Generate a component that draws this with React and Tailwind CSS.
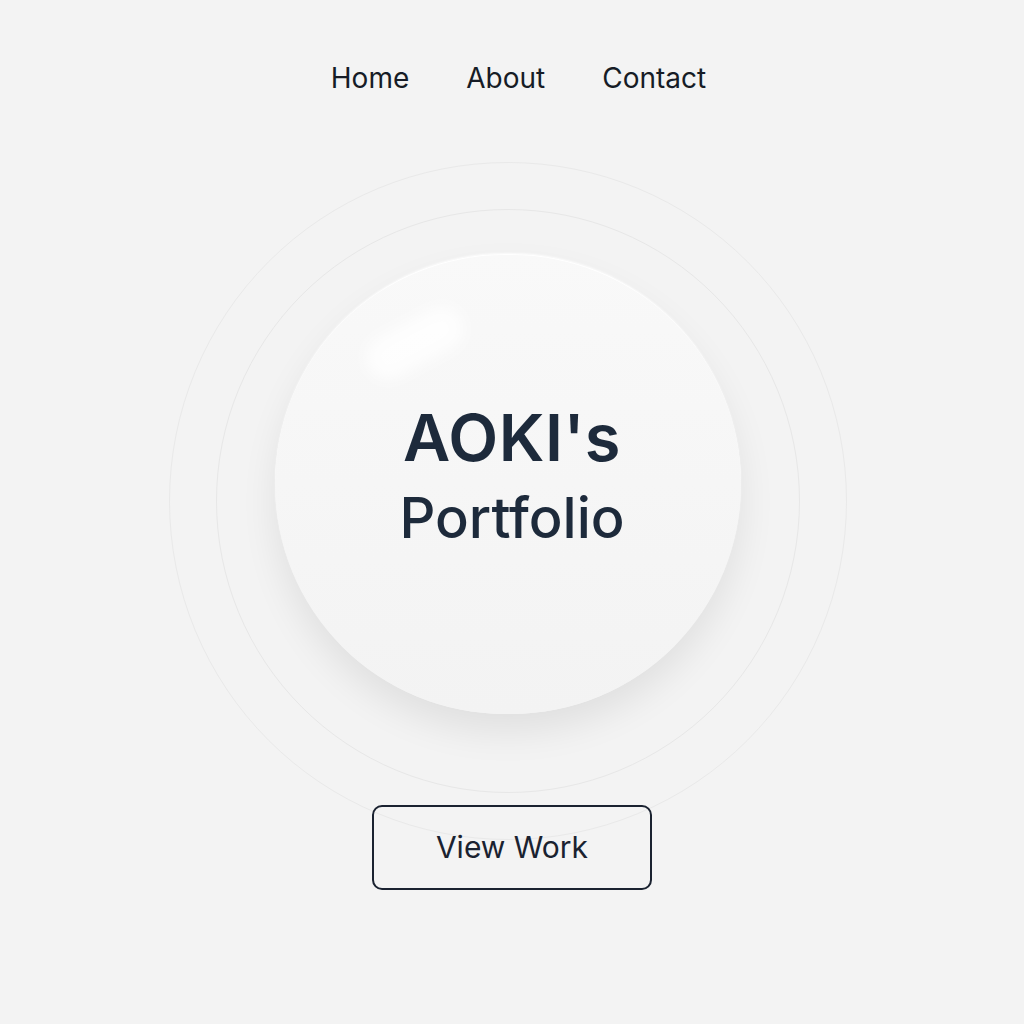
import React from 'react';

const navLinks = ['Home', 'About', 'Contact'];

export default function App() {
  return (
    <div
      className="min-h-screen w-full bg-[#f3f3f3] flex flex-col items-center"
      style={{ fontFamily: 'Inter, "Noto Sans", sans-serif' }}
    >
      {/* nav */}
      <nav className="flex items-center gap-[57px] pt-[58px] pl-[13px] h-[98px]">
        {navLinks.map((link) => (
          <a key={link} href="#" className="text-[28px] leading-[38px] text-[#161c26]">
            {link}
          </a>
        ))}
      </nav>

      {/* hero rings */}
      <div className="mt-[64px] mr-[9px] w-[678px] h-[678px] rounded-full border border-[#e9e9e9] flex items-center justify-center">
        <div className="w-[584px] h-[584px] rounded-full border border-[#e7e7e7] flex justify-center items-start pt-[44px]">
          <div className="relative w-[466px] h-[460px] rounded-full bg-gradient-to-b from-[#f9f9f9] to-[#f3f3f3] shadow-[0_18px_36px_rgba(0,0,0,0.08),0_-1px_2px_rgba(255,255,255,0.9)] border-t border-white flex flex-col items-center justify-center pb-[18px] pl-[9px]">
            <div className="absolute left-[88px] top-[66px] w-[104px] h-[44px] rounded-full bg-white/80 blur-[7px] -rotate-[28deg]" />
            <h1 className="relative text-[65px] leading-[80px] font-semibold text-[#1d2a3b] tracking-[0.5px]">
              AOKI's
            </h1>
            <p className="relative text-[56px] leading-[72px] font-medium text-[#1d2a3b] mt-[4px]">
              Portfolio
            </p>
          </div>
        </div>
      </div>

      {/* button */}
      <button className="relative -mt-[35px] w-[280px] h-[85px] rounded-[10px] border-2 border-[#1a2230] text-[30px] text-[#1a2230] bg-transparent">
        View Work
      </button>
    </div>
  );
}
